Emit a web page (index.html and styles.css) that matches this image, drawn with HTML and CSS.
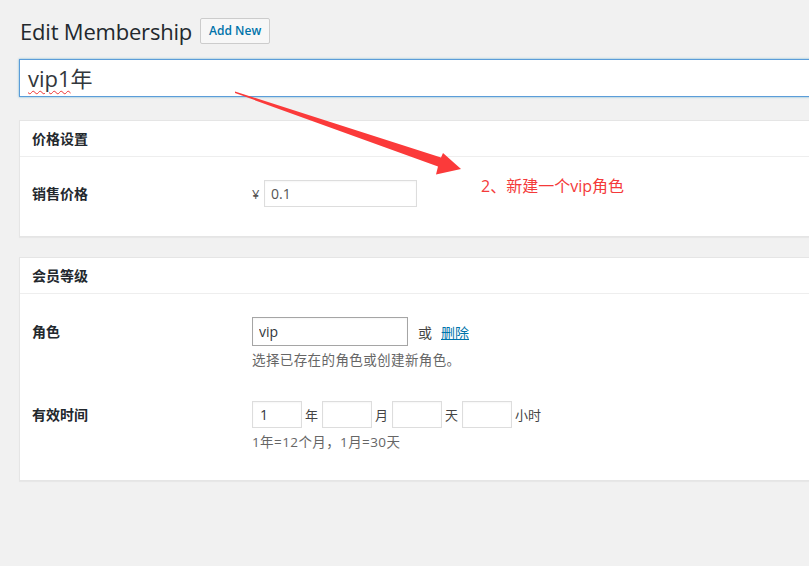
FILE: index.html
```html
<!DOCTYPE html>
<html lang="zh-CN">
<head>
  <meta charset="UTF-8" />
  <title>Edit Membership</title>
  <link rel="stylesheet" href="styles.css">
</head>
<body>
  <div class="wrap">
    <div class="page-head">
      <h1>Edit Membership</h1>
      <a class="add-new" href="#">Add New</a>
    </div>

    <div class="title-input"><span class="misspelled">vip1</span>年</div>

    <div class="postbox">
      <h2 class="postbox-title">价格设置</h2>
      <div class="inside">
        <div class="field-row">
          <div class="field-label">销售价格</div>
          <div class="field">
            <span class="currency">¥</span>
            <input class="price-input" type="text" value="0.1" />
          </div>
        </div>
      </div>
    </div>

    <div class="postbox">
      <h2 class="postbox-title">会员等级</h2>
      <div class="inside">
        <div class="field-row">
          <div class="field-label tall">角色</div>
          <div class="field-col">
            <div class="field">
              <input class="role-input" type="text" value="vip" />
              <span class="or">或</span>
              <a class="delete-link" href="#">删除</a>
            </div>
            <p class="description">选择已存在的角色或创建新角色。</p>
          </div>
        </div>

        <div class="field-row second">
          <div class="field-label">有效时间</div>
          <div class="field-col">
            <div class="field">
              <input class="time-input" type="text" value="1" /><span class="unit">年</span>
              <input class="time-input" type="text" value="" /><span class="unit">月</span>
              <input class="time-input" type="text" value="" /><span class="unit">天</span>
              <input class="time-input" type="text" value="" /><span class="unit">小时</span>
            </div>
            <p class="description">1年=12个月，1月=30天</p>
          </div>
        </div>
      </div>
    </div>
  </div>

  <!-- annotation drawn on top of the screenshot -->
  <svg class="arrow" width="809" height="566" viewBox="0 0 809 566">
    <polygon points="235,91.5 441,157.5 443,153 461,169 436,174.5 438,166.5 235,93" fill="#fb3a3a" />
  </svg>
  <div class="note">2、新建一个vip角色</div>
</body>
</html>
```

FILE: styles.css
```css
html, body {
  overflow: hidden;
}

body {
  margin: 0;
  background-color: #f1f1f1;
  color: #444;
  font-family: "Segoe UI", "Open Sans", "Noto Sans CJK SC", sans-serif;
  font-size: 13px;
  position: relative;
  height: 566px;
}

.wrap {
  margin-left: 19px;
  width: 820px;
}

.page-head {
  display: flex;
  align-items: center;
  height: 30px;
  margin-top: 16px;
}

.page-head h1 {
  margin: 0 0 0 1px;
  font-size: 22px;
  font-weight: 400;
  color: #23282d;
  letter-spacing: -0.2px;
}

.add-new {
  margin-left: 8px;
  height: 24px;
  line-height: 24px;
  padding: 0 8px;
  border: 1px solid #ccc;
  border-radius: 2px;
  background-color: #f7f7f7;
  color: #0073aa;
  font-size: 12px;
  font-weight: 600;
  text-decoration: none;
}

.title-input {
  margin-top: 13px;
  height: 36px;
  line-height: 36px;
  padding: 0 8px;
  border: 1px solid #5b9dd9;
  background: white;
  box-shadow: 0 0 2px rgba(30, 140, 190, 0.6);
  font-size: 22px;
  color: #32373c;
}

.misspelled {
  text-decoration: underline wavy #e33;
  text-decoration-thickness: 1px;
  text-underline-offset: 3px;
}

.postbox {
  margin-top: 23px;
  background: white;
  border: 1px solid #e5e5e5;
  box-shadow: 0 1px 1px rgba(0, 0, 0, 0.04);
}

.postbox + .postbox {
  margin-top: 20px;
}

.postbox-title {
  margin: 0;
  height: 35px;
  line-height: 35px;
  padding: 0 12px;
  border-bottom: 1px solid #eee;
  font-size: 14px;
  font-weight: 600;
  color: #23282d;
}

.inside {
  padding: 23px 12px 29px;
}

.postbox + .postbox .inside {
  padding-bottom: 28px;
}

.field-row {
  display: flex;
  align-items: flex-start;
}

.field-row.second {
  margin-top: 31px;
}

.field-label {
  width: 220px;
  line-height: 27px;
  font-size: 14px;
  font-weight: 600;
  color: #23282d;
}

.field-label.tall {
  line-height: 29px;
}

.field {
  display: flex;
  align-items: center;
}

.field-col {
  display: flex;
  flex-direction: column;
}

input {
  box-sizing: border-box;
  margin: 0;
  border: 1px solid #ddd;
  background: white;
  font-family: inherit;
  font-size: 14px;
  color: #32373c;
  box-shadow: inset 0 1px 2px rgba(0, 0, 0, 0.04);
  outline: none;
}

.currency {
  width: 12px;
  font-size: 13px;
  color: #555;
}

.price-input {
  width: 153px;
  height: 27px;
  padding: 0 6px;
  color: #555;
}

.role-input {
  width: 156px;
  height: 29px;
  padding: 0 6px;
  border-color: #a5a5a5;
}

.or {
  margin-left: 10px;
  font-size: 14px;
  color: #444;
}

.delete-link {
  margin-left: 9px;
  font-size: 14px;
  color: #0073aa;
}

.description {
  margin: 4px 0 0;
  line-height: 20px;
  font-size: 13.5px;
  letter-spacing: 0.4px;
  color: #666;
}

.time-input {
  width: 50px;
  height: 27px;
  padding: 0 7px;
}

.unit {
  margin: 0 4px 0 3px;
  font-size: 13px;
  color: #444;
}

.arrow {
  position: absolute;
  left: 0;
  top: 0;
  pointer-events: none;
}

.note {
  position: absolute;
  left: 481px;
  top: 175px;
  font-size: 16px;
  line-height: 22px;
  color: #f43a3a;
}
```
